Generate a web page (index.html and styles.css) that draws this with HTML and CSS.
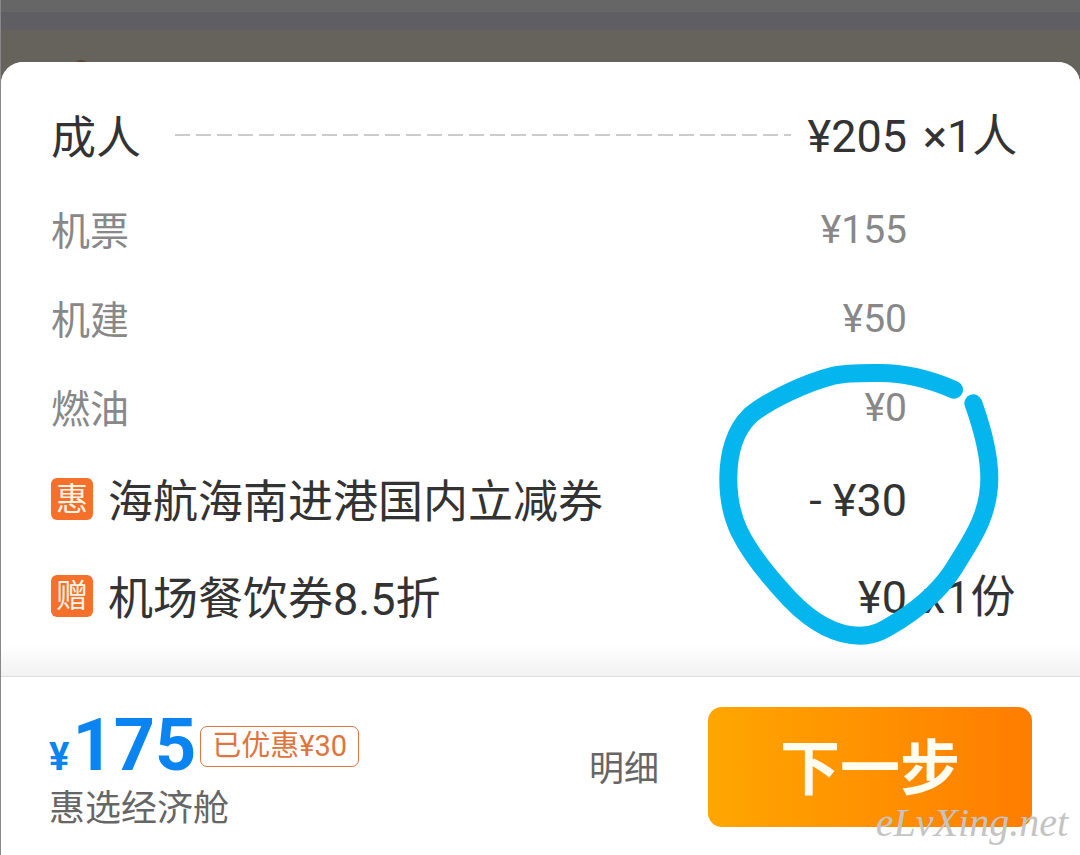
FILE: index.html
```html
<!DOCTYPE html>
<html lang="zh-CN">
<head>
  <meta charset="UTF-8" />
  <meta name="viewport" content="width=device-width, initial-scale=1.0"/>
  <title>价格明细</title>
  <link rel="stylesheet" href="styles.css">
</head>
<body>
  <div class="backdrop">
    <div class="band band-top"></div>
    <div class="band band-divider"></div>
    <div class="band band-notice"><span class="notice-dot"></span></div>
  </div>

  <main class="sheet">
    <section class="details">
      <table class="fees">
        <tbody>
          <tr class="total">
            <th scope="row"><div class="item">成人<span class="leader"></span></div></th>
            <td class="price">¥205</td>
            <td class="qty">×1人</td>
          </tr>
          <tr class="sub">
            <th scope="row">机票</th>
            <td class="price">¥155</td>
            <td class="qty"></td>
          </tr>
          <tr class="sub">
            <th scope="row">机建</th>
            <td class="price">¥50</td>
            <td class="qty"></td>
          </tr>
          <tr class="sub">
            <th scope="row">燃油</th>
            <td class="price">¥0</td>
            <td class="qty"></td>
          </tr>
          <tr class="promo">
            <th scope="row"><div class="item"><span class="badge">惠</span>海航海南进港国内立减券</div></th>
            <td class="price">- ¥30</td>
            <td class="qty"></td>
          </tr>
          <tr class="promo">
            <th scope="row"><div class="item"><span class="badge">赠</span>机场餐饮券8.5折</div></th>
            <td class="price">¥0</td>
            <td class="qty">x1份</td>
          </tr>
        </tbody>
      </table>

      <!-- hand-drawn marker loop -->
      <svg class="marker" viewBox="0 0 960 930" aria-hidden="true">
        <path d="M762 119 C690 88 610 69 540 69 C480 69 440 68 400 77 C320 97 205 150 150 197 C105 240 86 310 85 380 C84 440 92 490 118 545 C155 620 215 690 270 748 C325 805 400 857 480 857 C530 857 560 835 600 810 C670 765 725 715 765 650 C810 575 868 500 868 385 C868 310 845 230 820 160"/>
      </svg>
    </section>

    <footer class="footer">
      <div class="summary">
        <div class="amount">
          <span class="currency">¥</span>
          <span class="number">175</span>
          <span class="tag">已优惠¥30</span>
        </div>
        <div class="cabin">惠选经济舱</div>
      </div>
      <button type="button" class="detail-btn">明细</button>
      <button type="button" class="next-btn">下一步</button>
      <span class="watermark">eLvXing.net</span>
    </footer>
  </main>
</body>
</html>
```

FILE: styles.css
```css
* {
  box-sizing: border-box;
}
body {
  margin: 0;
  min-height: 100vh;
  display: flex;
  flex-direction: column;
  border-left: 1px solid #888;
  background-color: #66625c;
  color: #333;
  font-family: Roboto, "Noto Sans CJK SC", sans-serif;
}
button {
  border: none;
  padding: 0;
  font-family: inherit;
  cursor: pointer;
}

/* dimmed page behind the sheet */
.band-top {
  height: 12px;
  background-color: #666;
}
.band-divider {
  height: 18px;
  background-color: #5f5f63;
}
.band-notice {
  height: 32px;
  padding-left: 72px;
  padding-top: 30px;
  overflow: hidden;
}
.notice-dot {
  display: block;
  width: 16px;
  height: 16px;
  border-radius: 50%;
  background-color: #5c4336;
}

.sheet {
  flex: 1;
  display: flex;
  flex-direction: column;
  background-color: #fff;
  border-radius: 22px 22px 0 0;
}
.details {
  position: relative;
  padding: 27px 48px 30px 50px;
  border-bottom: 1px solid #ddd;
  background: linear-gradient(to top, #f2f2f2, #fff 32px);
  border-radius: 22px 22px 0 0;
}
.fees {
  width: 100%;
  border-collapse: collapse;
  font-size: 45px;
  line-height: 60px;
}
.fees th,
.fees td {
  padding: 0;
  font-weight: normal;
  text-align: left;
  white-space: nowrap;
}
.fees th {
  width: 100%;
  padding-top: 4px;
}
.fees .price {
  text-align: right;
}
.fees .qty {
  min-width: 125px;
  padding-left: 16px;
}
.total {
  height: 96px;
}
.promo {
  height: 97px;
}
.sub {
  height: 89px;
  font-size: 39px;
  color: #888;
}
.item {
  display: flex;
  align-items: center;
}
.leader {
  flex: 1;
  height: 2px;
  margin: 0 16px 8px 34px;
  background: repeating-linear-gradient(to right, #ccc 0 15px, transparent 15px 21px);
}
.badge {
  width: 42px;
  height: 42px;
  margin-right: 15px;
  margin-bottom: 8px;
  border-radius: 6px;
  background-color: #f5702a;
  color: #fff3e6;
  font-size: 32px;
  line-height: 42px;
  text-align: center;
}
.marker {
  position: absolute;
  top: 288px;
  right: 60px;
  width: 320px;
  height: 310px;
}
.marker path {
  fill: none;
  stroke: #05b6ee;
  stroke-width: 54;
  stroke-linecap: round;
  stroke-linejoin: round;
}

.footer {
  position: relative;
  flex: 1;
  display: flex;
  align-items: flex-start;
  padding: 30px 48px 28px;
}
.summary {
  flex: 1;
}
.amount {
  display: flex;
  align-items: baseline;
  color: #0a84f0;
  font-weight: bold;
  line-height: 78px;
}
.currency {
  font-size: 38px;
  line-height: 40px;
}
.number {
  margin-left: 3px;
  font-size: 72px;
}
.tag {
  align-self: center;
  margin-left: 4px;
  padding: 0 11px;
  border: 1px solid #d9773f;
  border-radius: 7px;
  color: #e0753c;
  font-size: 29px;
  font-weight: normal;
  line-height: 39px;
}
.cabin {
  color: #666;
  font-size: 36px;
  line-height: 48px;
}
.detail-btn {
  height: 120px;
  margin-right: 49px;
  padding-bottom: 4px;
  background: none;
  color: #666;
  font-size: 35px;
}
.next-btn {
  flex: 0 1 324px;
  height: 120px;
  padding-bottom: 8px;
  border-radius: 14px;
  background: linear-gradient(to right, #ffa600, #ff7d00);
  color: #fffdf0;
  font-size: 60px;
  font-weight: bold;
}
.watermark {
  position: absolute;
  right: 12px;
  bottom: 16px;
  color: #c4c4c4;
  font-family: "Liberation Serif", serif;
  font-size: 40px;
  font-style: italic;
  line-height: 44px;
}
```
